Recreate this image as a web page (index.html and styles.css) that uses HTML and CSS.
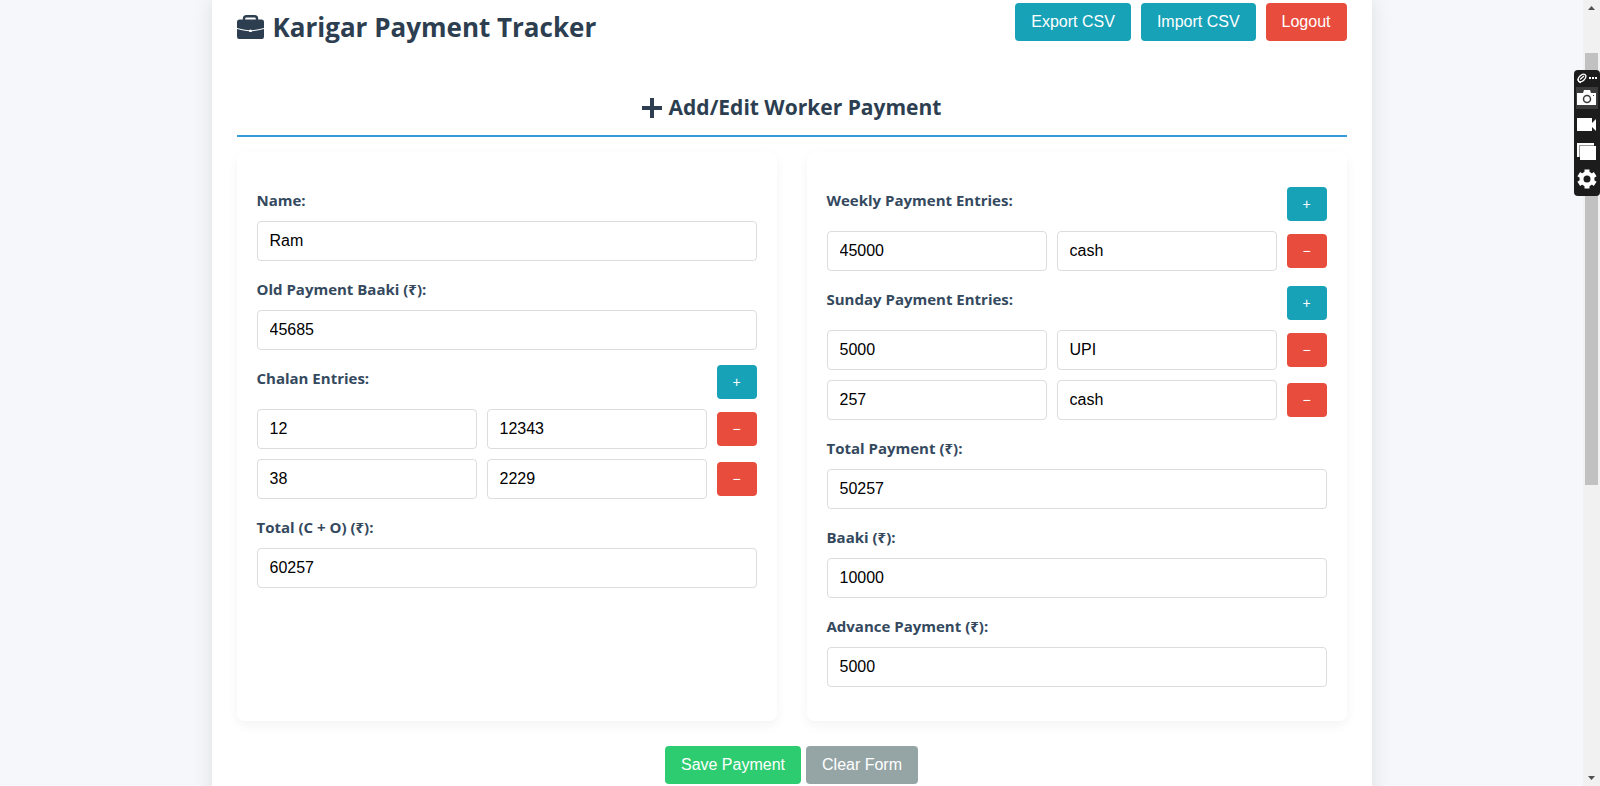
FILE: index.html
```html
<!DOCTYPE html>
<html lang="en">
<head>
<meta charset="utf-8">
<title>Karigar Payment Tracker</title>
<link rel="stylesheet" href="styles.css">
</head>
<body>
<div class="viewport">
  <div class="page">
    <main class="container">
      <header class="header">
        <h1 class="title">
          <svg class="icon-case" viewBox="0 0 27 24" aria-hidden="true"><path d="M7 5V3.500Q7 1.200 9.500 1.200H17.500Q20 1.200 20 3.500V5" fill="none" stroke="currentColor" stroke-width="2.400"/><path d="M2.500 4.500H24.500Q27 4.500 27 7V13Q20 15 15 15.200Q13.500 13.800 12 15.200Q7 15 0 13V7Q0 4.500 2.500 4.500Z" fill="currentColor"/><path d="M0 14Q7 16 11.800 16.200Q13.500 18 15.200 16.200Q20 16 27 14V21.500Q27 24 25 24H2Q0 24 0 21.500Z" fill="currentColor"/></svg>
          Karigar Payment Tracker
        </h1>
        <div class="header-actions">
          <button class="btn btn-info" type="button">Export CSV</button>
          <button class="btn btn-info" type="button">Import CSV</button>
          <button class="btn btn-danger" type="button">Logout</button>
        </div>
      </header>

      <h2 class="section-title">
        <svg class="icon-plus" viewBox="0 0 20 20" aria-hidden="true"><path d="M8 0H12V8H20V12H12V20H8V12H0V8H8Z" fill="currentColor"/></svg>
        Add/Edit Worker Payment
      </h2>

      <form>
        <div class="columns">
          <section class="card">
            <div class="group">
              <label class="label" for="name">Name:</label>
              <input class="input" id="name" type="text" value="Ram">
            </div>
            <div class="group">
              <label class="label" for="old">Old Payment Baaki (₹):</label>
              <input class="input" id="old" type="text" value="45685">
            </div>
            <div class="group">
              <div class="entry-head">
                <label class="label" for="chalan1">Chalan Entries:</label>
                <button class="btn-small btn-info" type="button">+</button>
              </div>
              <div class="entries">
                <div class="entry">
                  <input class="input" id="chalan1" type="text" value="12">
                  <input class="input" type="text" value="12343" aria-label="Chalan amount 1">
                  <button class="btn-small btn-danger" type="button">−</button>
                </div>
                <div class="entry">
                  <input class="input" type="text" value="38" aria-label="Chalan number 2">
                  <input class="input" type="text" value="2229" aria-label="Chalan amount 2">
                  <button class="btn-small btn-danger" type="button">−</button>
                </div>
              </div>
            </div>
            <div class="group">
              <label class="label" for="total">Total (C + O) (₹):</label>
              <input class="input" id="total" type="text" value="60257">
            </div>
          </section>

          <section class="card">
            <div class="group">
              <div class="entry-head">
                <label class="label" for="weekly1">Weekly Payment Entries:</label>
                <button class="btn-small btn-info" type="button">+</button>
              </div>
              <div class="entries">
                <div class="entry">
                  <input class="input" id="weekly1" type="text" value="45000">
                  <input class="input" type="text" value="cash" aria-label="Weekly method 1">
                  <button class="btn-small btn-danger" type="button">−</button>
                </div>
              </div>
            </div>
            <div class="group">
              <div class="entry-head">
                <label class="label" for="sunday1">Sunday Payment Entries:</label>
                <button class="btn-small btn-info" type="button">+</button>
              </div>
              <div class="entries">
                <div class="entry">
                  <input class="input" id="sunday1" type="text" value="5000">
                  <input class="input" type="text" value="UPI" aria-label="Sunday method 1">
                  <button class="btn-small btn-danger" type="button">−</button>
                </div>
                <div class="entry">
                  <input class="input" type="text" value="257" aria-label="Sunday amount 2">
                  <input class="input" type="text" value="cash" aria-label="Sunday method 2">
                  <button class="btn-small btn-danger" type="button">−</button>
                </div>
              </div>
            </div>
            <div class="group">
              <label class="label" for="payment">Total Payment (₹):</label>
              <input class="input" id="payment" type="text" value="50257">
            </div>
            <div class="group">
              <label class="label" for="baaki">Baaki (₹):</label>
              <input class="input" id="baaki" type="text" value="10000">
            </div>
            <div class="group">
              <label class="label" for="advance">Advance Payment (₹):</label>
              <input class="input" id="advance" type="text" value="5000">
            </div>
          </section>
        </div>
        <div class="form-actions">
          <button class="btn btn-success" type="button">Save Payment</button>
          <button class="btn btn-muted" type="button">Clear Form</button>
        </div>
      </form>
    </main>
  </div>

  <div class="scrollbar" aria-hidden="true">
    <svg class="arrow" viewBox="0 0 17 17"><path d="M5 10L8.500 6L12 10Z" fill="#505050"/></svg>
    <div class="track"><div class="thumb"></div></div>
    <svg class="arrow" viewBox="0 0 17 17"><path d="M5 7L8.500 11L12 7Z" fill="#505050"/></svg>
  </div>

  <div class="capture">
    <svg class="capture-top" viewBox="0 0 24 16" aria-hidden="true"><g fill="none" stroke="#fff" stroke-width="1.300"><ellipse cx="7" cy="7" rx="4.500" ry="2.800" transform="rotate(-45 7 7)"/><path d="M3 8Q3 11 6 11.500M5 8.500L9 5"/></g><path d="M14 6h2v2h-2zM17 6h2v2h-2zM20 6h2v2h-2z" fill="#fff"/></svg>
    <div class="tools">
      <button class="tool tool-active" type="button" aria-label="Screenshot"><svg viewBox="0 0 22 22"><path d="M1 6H7L8 3H14L15 6H20V18H1Z" fill="#fff"/><circle cx="11" cy="12" r="3.500" fill="#fff" stroke="#3b3b3b" stroke-width="1.500"/><path d="M17 8h1v1h-1z" fill="#3b3b3b"/></svg></button>
      <button class="tool" type="button" aria-label="Record"><svg viewBox="0 0 22 22"><path d="M1 4H16V9L20 5V17L16 13V17H1Z" fill="#fff"/></svg></button>
      <button class="tool" type="button" aria-label="Gallery"><svg viewBox="0 0 22 22"><path d="M1 2H18V5H4V16H1Z" fill="#fff"/><path d="M3 4H18V5H4V16H3Z" fill="#999"/><path d="M4 5H20V19H4Z" fill="#fff"/></svg></button>
      <button class="tool" type="button" aria-label="Settings"><svg viewBox="0 0 22 22"><circle cx="11" cy="11" r="5.500" fill="none" stroke="#fff" stroke-width="4"/><g stroke="#fff" stroke-width="5"><path d="M11 1.500V5M11 17V20.500M2.800 6.200L5.500 8M16.500 14L19.200 15.800M2.800 15.800L5.500 14M16.500 8L19.200 6.200"/></g></svg></button>
    </div>
  </div>
</div>
</body>
</html>
```
FILE: styles.css
```css
* { box-sizing: border-box; }

body {
  margin: 0;
  background: #f5f7fb;
  color: #2c3e50;
  font-family: "Segoe UI", "Open Sans", "Noto Sans", sans-serif;
  font-size: 16px;
  line-height: 26px;
}

.viewport {
  display: flex;
  position: relative;
  height: 100vh;
  overflow: hidden;
}

.page { flex: 1; min-width: 0; overflow: hidden; }

.container {
  max-width: 1160px;
  min-height: 100%;
  margin: 0 auto;
  padding: 3px 25px 25px;
  background: #fff;
  box-shadow: 0 0 20px rgba(0, 0, 0, 0.1);
}

.header {
  display: flex;
  justify-content: space-between;
  align-items: flex-start;
  margin-bottom: 37px;
}

.title {
  display: flex;
  align-items: center;
  gap: 9px;
  margin: 0;
  font-size: 26px;
  font-weight: 700;
  line-height: 48px;
}

.icon-case { width: 27px; height: 24px; }
.icon-plus { width: 20px; height: 20px; }

.header-actions { display: flex; gap: 10px; }

.btn,
.btn-small {
  border: 0;
  border-radius: 4px;
  color: #fff;
  font-family: Arial, "Liberation Sans", sans-serif;
}

.btn { padding: 10px 16px; font-size: 16px; line-height: 18px; }
.btn-small { width: 40px; height: 34px; padding: 0; font-size: 14px; line-height: 16px; }
.btn-info { background: #17a2b8; }
.btn-danger { background: #e74c3c; }
.btn-success { background: #2ecc71; }
.btn-muted { background: #95a5a6; }

.section-title {
  display: flex;
  justify-content: center;
  align-items: center;
  gap: 7px;
  margin: 0 0 15px;
  padding-bottom: 8px;
  border-bottom: 2px solid #3498db;
  font-size: 21px;
  font-weight: 700;
  line-height: 39px;
}

.columns {
  display: grid;
  grid-template-columns: 1fr 1fr;
  gap: 30px;
}

.card {
  padding: 35px 20px 19px;
  border-radius: 8px;
  background: #fff;
  box-shadow: 0 4px 12px rgba(0, 0, 0, 0.05);
}

.group { margin-bottom: 15px; }

.label {
  display: block;
  margin-bottom: 8px;
  color: #34495e;
  font-size: 15px;
  font-weight: 700;
}

.input {
  display: block;
  width: 100%;
  min-width: 0;
  height: 40px;
  padding: 0 12px;
  border: 1px solid #ddd;
  border-radius: 4px;
  background: #fff;
  color: #000;
  font-family: Arial, "Liberation Sans", sans-serif;
  font-size: 16px;
}

.entry-head {
  display: flex;
  justify-content: space-between;
  margin-bottom: 10px;
}

.entries { display: grid; gap: 10px; }

.entry {
  display: grid;
  grid-template-columns: 1fr 1fr 40px;
  align-items: center;
  gap: 10px;
}

.form-actions {
  display: flex;
  justify-content: center;
  gap: 5px;
  margin-top: 25px;
}

.scrollbar {
  display: flex;
  flex-direction: column;
  width: 17px;
  background: #f1f1f1;
}

.arrow { display: block; width: 17px; height: 17px; }
.track { flex: 1; padding: 36px 2px 0; }
.thumb { height: 432px; background: #c1c1c1; }

/* Floating capture toolbar */
.capture {
  display: flex;
  flex-direction: column;
  align-items: center;
  position: absolute;
  top: 70px;
  right: 0;
  width: 26px;
  padding: 1px 0 6px;
  border-radius: 4px;
  background: #1c1c1c;
}

.capture-top { display: block; width: 24px; height: 16px; }

.tools { display: grid; gap: 5px; }

.tool {
  display: block;
  width: 22px;
  height: 22px;
  padding: 0;
  border: 0;
  background: none;
}

.tool svg { display: block; width: 22px; height: 22px; }
.tool-active { background: #3b3b3b; }
```
